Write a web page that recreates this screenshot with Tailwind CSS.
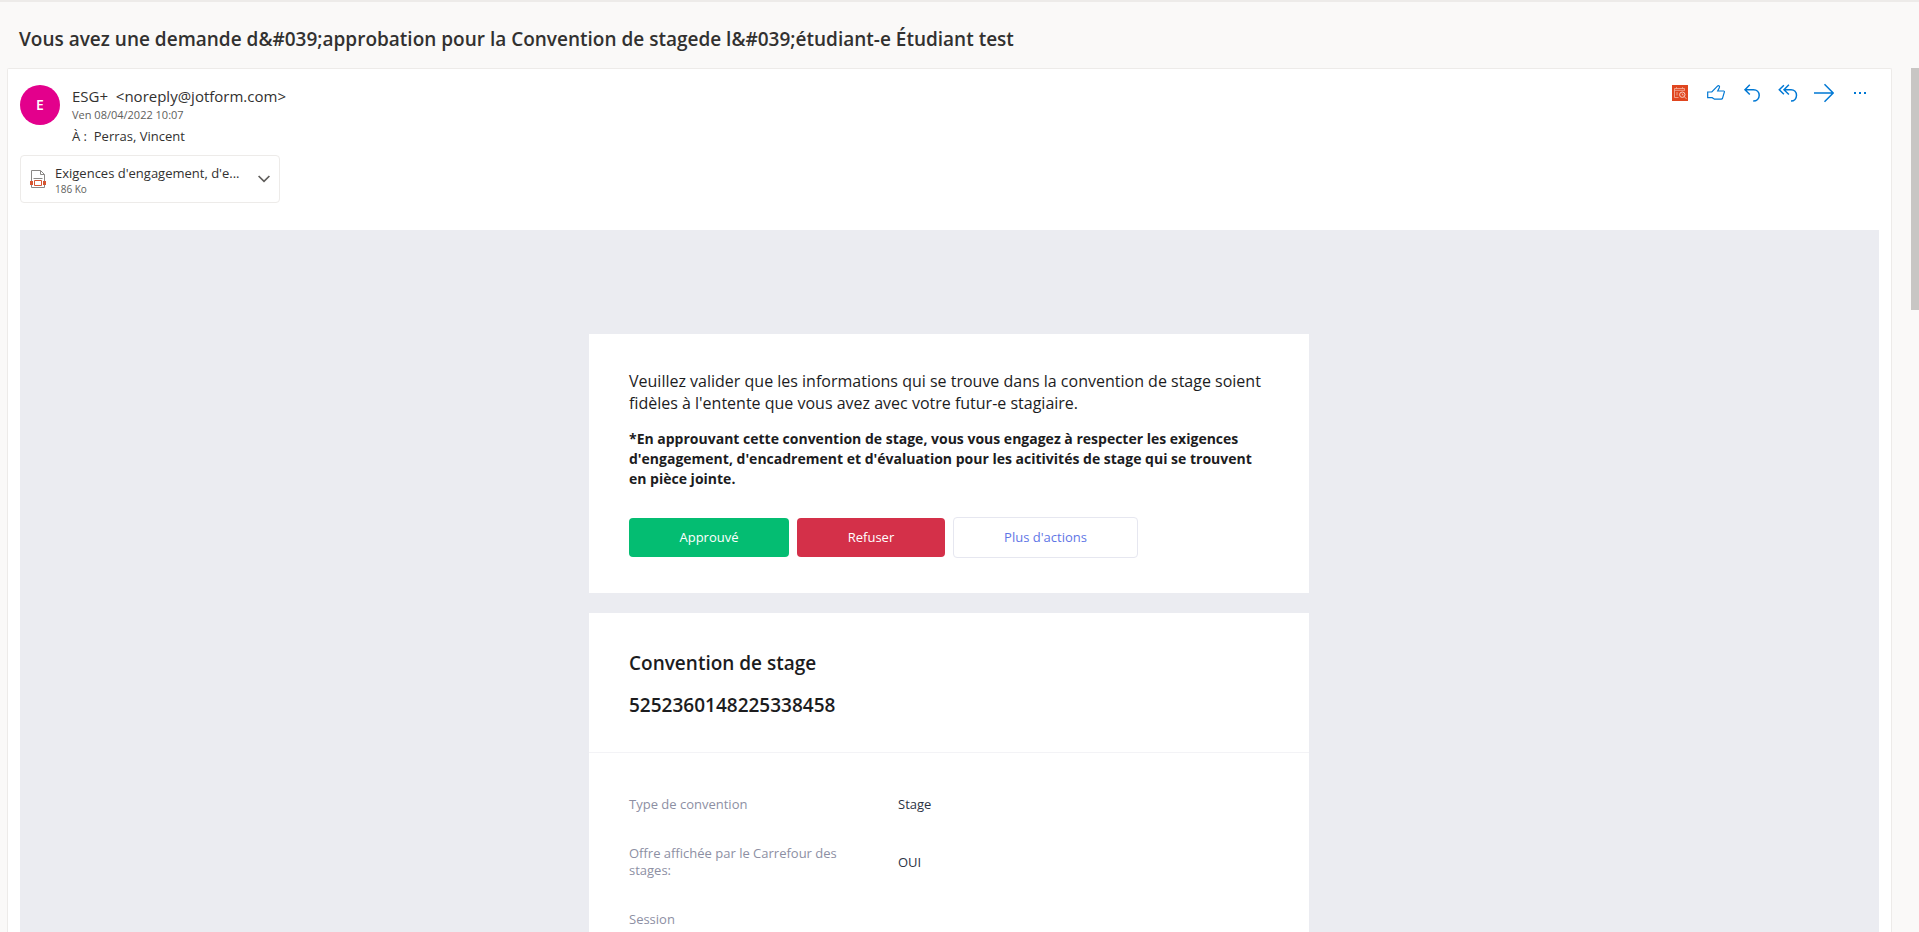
<!DOCTYPE html>
<html lang="fr">
<head>
  <meta charset="UTF-8" />
  <meta name="viewport" content="width=device-width, initial-scale=1.0" />
  <title>Convention de stage</title>
  <script src="https://cdn.jsdelivr.net/npm/@tailwindcss/browser@4"></script>
</head>
<body class="flex flex-col h-screen overflow-hidden bg-[#faf9f8] border-t-2 border-[#edebe9] font-['Open_Sans',sans-serif] text-[#323130]">

  <header class="flex items-center h-[66px] shrink-0 px-[19px] pt-2">
    <h1 class="text-[19px] font-semibold whitespace-nowrap">Vous avez une demande d&amp;#039;approbation pour la Convention de stagede l&amp;#039;étudiant-e Étudiant test</h1>
  </header>

  <div class="flex flex-1 min-h-0 pl-[7px]">
    <main class="flex flex-col flex-1 min-w-0 bg-white border border-b-0 border-[#edebe9] rounded-t-xs px-3 pt-4">

      <!-- Sender -->
      <div class="flex items-start">
        <div class="flex items-center justify-center size-10 rounded-full bg-[#e3008c] text-white text-sm font-semibold">E</div>
        <div class="flex-1 pl-3">
          <p class="text-[15px] leading-[22px]">ESG+ &nbsp;&lt;noreply@jotform.com&gt;</p>
          <p class="mt-0.5 text-[11px] leading-3 text-[#605e5c]">Ven 08/04/2022 10:07</p>
          <p class="mt-[7px] text-[13px] leading-4">À : &nbsp;Perras, Vincent</p>
        </div>

        <div class="flex -mt-[10px] mr-px text-[#0078d4]">
          <button type="button" aria-label="Calendrier" class="flex items-center justify-center size-9">
            <svg class="size-4" viewBox="0 0 16 16" fill="none">
              <path fill="#e0461f" d="M0 0h16v16H0z" />
              <path stroke="#f6b5a2" stroke-width=".8" d="M6.500 12.500h-4v-9h10v2.200M2.500 5.300h10M4.500 2.200v1.500M10.500 2.200v1.500M5 7v3.500" />
              <circle cx="10.300" cy="9.700" r="2.700" stroke="#fbd3c6" />
              <path stroke="#fbd3c6" stroke-width=".8" d="M10.300 8.500v1.400h1.200M12.300 11.700l2.200 2.200" />
            </svg>
          </button>
          <button type="button" aria-label="J'aime" class="flex items-center justify-center size-9">
            <svg class="size-5" viewBox="0 0 20 20" fill="none" stroke="currentColor" stroke-width="1.200">
              <path d="M1.700 9h4.100L11.200 3.300c.7-.7 1.500-.8 2-.4.500.5.400 1.100.1 1.800L11.700 8h6c.5 0 .8.400.7.900l-1.900 6.400c-.2.600-.6.900-1.200.9H8.500l-2.300-1.500H1.700z" />
            </svg>
          </button>
          <button type="button" aria-label="Répondre" class="flex items-center justify-center size-9">
            <svg class="size-5" viewBox="0 0 20 20" fill="none" stroke="currentColor" stroke-width="1.500">
              <path d="M7.800 1.800 3 6.700l4.800 4.800M3 6.700h8.500c3.300 0 5.700 2.400 5.700 5.600 0 3.300-2.400 5.800-6 5.800" />
            </svg>
          </button>
          <button type="button" aria-label="Répondre à tous" class="flex items-center justify-center size-9">
            <svg class="size-5" viewBox="0 0 20 20" fill="none" stroke="currentColor" stroke-width="1.500">
              <path d="M5.900 2.200 1.300 6.700l4.600 4.600M10.900 1.800 6 6.700l4.900 4.800M6 6.700h7c3.300 0 5.500 2.400 5.500 5.600 0 3.300-2.300 5.800-5.500 5.800" />
            </svg>
          </button>
          <button type="button" aria-label="Transférer" class="flex items-center justify-center size-9">
            <svg class="size-5" viewBox="0 0 20 20" fill="none" stroke="currentColor" stroke-width="1.500">
              <path d="M0 10h19M10.500 1.200 19.200 10l-8.700 8.800" />
            </svg>
          </button>
          <button type="button" aria-label="Autres actions" class="flex items-center justify-center size-9">
            <svg class="size-5" viewBox="0 0 20 20" fill="currentColor">
              <path d="M4 9h2v2H4zM9 9h2v2H9zM14 9h2v2h-2z" />
            </svg>
          </button>
        </div>
      </div>

      <!-- Attachment -->
      <button type="button" class="flex items-center w-[260px] h-12 mt-[11px] px-[9px] shrink-0 border border-[#edebe9] rounded-sm text-left">
        <svg class="w-4 h-5 shrink-0" viewBox="0 0 16 20" fill="none">
          <path stroke="#8a8886" d="M1.500 12V1.500h9l4 4V12M10.500 1.500v4h4M1.500 15v3.500h13V15M3.500 9.500h9" />
          <path fill="#d65532" d="M0 12h3v4H0zM13 12h3v4h-3z" />
          <path fill="#fff" stroke="#d65532" d="M4.500 11.500h7v5h-7z" />
        </svg>
        <span class="flex-1 min-w-0 pl-[9px]">
          <span class="block truncate text-[13px] leading-5">Exigences d'engagement, d'e...</span>
          <span class="block text-[10px] leading-3 text-[#605e5c]">186 Ko</span>
        </span>
        <svg class="w-3 h-2 shrink-0" viewBox="0 0 12 8" fill="none" stroke="#605e5c" stroke-width="1.700">
          <path d="M.6 1 6 6.400 11.400 1" />
        </svg>
      </button>

      <!-- Message body -->
      <div class="flex-1 min-h-0 mt-[27px] pt-[104px] pr-px bg-[#ebecf1] text-[#1c1c1e]">
        <section class="w-[720px] mx-auto px-10 pt-9 pb-[35px] bg-white">
          <p class="text-base leading-[22px]">Veuillez valider que les informations qui se trouve dans la convention de stage soient fidèles à l'entente que vous avez avec votre futur-e stagiaire.</p>
          <p class="mt-[15px] text-sm leading-5 font-bold">*En approuvant cette convention de stage, vous vous engagez à respecter les exigences d'engagement, d'encadrement et d'évaluation pour les acitivités de stage qui se trouvent en pièce jointe.</p>
          <div class="flex items-center gap-2 mt-7 text-[13px]">
            <button type="button" class="w-40 h-[39px] rounded-sm bg-[#04bd72] text-white">Approuvé</button>
            <button type="button" class="w-[148px] h-[39px] rounded-sm bg-[#d43049] text-white">Refuser</button>
            <button type="button" class="w-[185px] h-[41px] rounded-sm border border-[#e6e7f0] text-[#5f76e6]">Plus d'actions</button>
          </div>
        </section>

        <section class="w-[720px] mx-auto mt-5 bg-white">
          <div class="px-10 pt-9 pb-[33px] border-b border-[#f3f3f6] text-[19px] font-semibold">
            <h2 class="leading-7">Convention de stage</h2>
            <p class="mt-[14px] leading-7">5252360148225338458</p>
          </div>
          <div class="px-10 pt-[27px]">
            <table class="w-full text-left text-[13px] leading-[17px]">
              <tbody>
                <tr>
                  <th scope="row" class="w-[269px] py-4 pr-10 font-normal text-[#8d8fa3]">Type de convention</th>
                  <td class="text-[#2c3345]">Stage</td>
                </tr>
                <tr>
                  <th scope="row" class="py-4 pr-10 font-normal text-[#8d8fa3]">Offre affichée par le Carrefour des stages:</th>
                  <td class="text-[#2c3345]">OUI</td>
                </tr>
                <tr>
                  <th scope="row" class="py-4 pr-10 font-normal text-[#8d8fa3]">Session</th>
                  <td></td>
                </tr>
              </tbody>
            </table>
          </div>
        </section>
      </div>
    </main>

    <!-- Scrollbar -->
    <div class="w-[27px] flex justify-end shrink-0">
      <div class="w-2 h-[242px] bg-[#c8c6c4]"></div>
    </div>
  </div>

</body>
</html>
